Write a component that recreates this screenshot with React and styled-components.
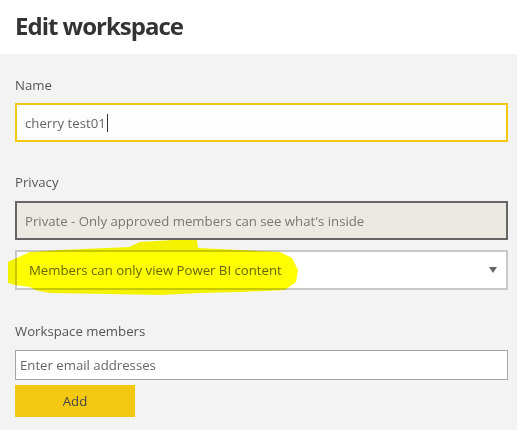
import styled, { createGlobalStyle } from "styled-components";

const GlobalStyle = createGlobalStyle`
  html, body {
    margin: 0;
    padding: 0;
    background: #f3f3f3;
  }
  body {
    font-family: "Open Sans", "Noto Sans", "Liberation Sans", sans-serif;
  }
`;

const Page = styled.div`
  width: 517px;
  height: 430px;
  background: #f3f3f3;
  overflow: hidden;
`;

const Header = styled.div`
  height: 54px;
  background: #ffffff;
  padding-left: 15px;
  display: flex;
  align-items: center;
`;

const Title = styled.h1`
  margin: 0;
  font-size: 24px;
  font-weight: 700;
  letter-spacing: -1px;
  color: #333333;
  line-height: 1;
  padding-bottom: 2px;
`;

const Form = styled.div`
  padding: 21px 9px 0 15px;
  display: flex;
  flex-direction: column;
`;

const Section = styled.div`
  display: flex;
  flex-direction: column;
  margin-bottom: ${(p) => p.$after || 0}px;
`;

const Label = styled.div`
  font-size: 13.2px;
  line-height: 20px;
  color: #555555;
  margin-bottom: ${(p) => p.$gap || 8}px;
`;

const TextBox = styled.div`
  height: 39px;
  box-sizing: border-box;
  border: 2px solid #f2c811;
  background: #fdfdfd;
  padding-left: 8px;
  display: flex;
  align-items: center;
  font-size: 13.2px;
  color: #666666;
`;

const Caret = styled.span`
  display: inline-block;
  width: 1px;
  height: 18px;
  background: #333333;
  margin-left: 1px;
`;

const Disabled = styled.div`
  height: 39px;
  box-sizing: border-box;
  border: 2px solid #666666;
  background: #ebe9e2;
  padding-left: 8px;
  display: flex;
  align-items: center;
  font-size: 13.2px;
  color: #777777;
  margin-bottom: 10px;
`;

const SelectWrap = styled.div`
  position: relative;
`;

const Select = styled.div`
  height: 40px;
  box-sizing: border-box;
  border: 2px solid #c8c8c8;
  background: #ffffff;
  padding: 0 9px 0 12px;
  display: flex;
  align-items: center;
  justify-content: space-between;
  font-size: 13.2px;
  color: #666666;
`;

const Highlight = styled.svg`
  position: absolute;
  left: -8px;
  top: -12px;
  width: 300px;
  height: 60px;
  pointer-events: none;
  mix-blend-mode: multiply;
`;

const EmailBox = styled.div`
  height: 30px;
  box-sizing: border-box;
  border: 1px solid #a6a6a6;
  background: #ffffff;
  padding-left: 4px;
  display: flex;
  align-items: center;
  font-size: 13.2px;
  color: #666666;
  margin-bottom: 5px;
`;

const AddButton = styled.button`
  width: 120px;
  height: 32px;
  border: none;
  background: #f2c811;
  color: #444444;
  font-family: inherit;
  font-size: 13.2px;
  padding: 0;
`;

// highlighter path, page coords shifted by (7, 238)
const mark = [
  [8, 262], [30, 252], [60, 250], [130, 247], [133, 245], [140, 242], [173, 240],
  [197, 240], [198, 248], [240, 250], [280, 252], [292, 258], [298, 270],
  [296, 282], [285, 290], [240, 292], [200, 293], [160, 295], [110, 294],
  [50, 293], [35, 290], [30, 287], [15, 285], [8, 283],
]
  .map(([x, y], i) => `${i ? "L" : "M"}${x - 7} ${y - 238}`)
  .join(" ") + " Z";

export default function App() {
  return (
    <Page>
      <GlobalStyle />
      <Header>
        <Title>Edit workspace</Title>
      </Header>
      <Form>
        <Section $after={30}>
          <Label>Name</Label>
          <TextBox>
            cherry test01
            <Caret />
          </TextBox>
        </Section>
        <Section $after={31}>
          <Label $gap={9}>Privacy</Label>
          <Disabled>Private - Only approved members can see what's inside</Disabled>
          <SelectWrap>
            <Select>
              <span>Members can only view Power BI content</span>
              <svg width="8" height="6" viewBox="0 0 8 6">
                <path d="M0 0 H8 L4 6 Z" fill="#666666" />
              </svg>
            </Select>
            <Highlight viewBox="0 0 300 60">
              <path d={mark} fill="#ffff00" strokeLinejoin="round" />
            </Highlight>
          </SelectWrap>
        </Section>
        <Section>
          <Label $gap={9}>Workspace members</Label>
          <EmailBox>Enter email addresses</EmailBox>
          <AddButton>Add</AddButton>
        </Section>
      </Form>
    </Page>
  );
}
